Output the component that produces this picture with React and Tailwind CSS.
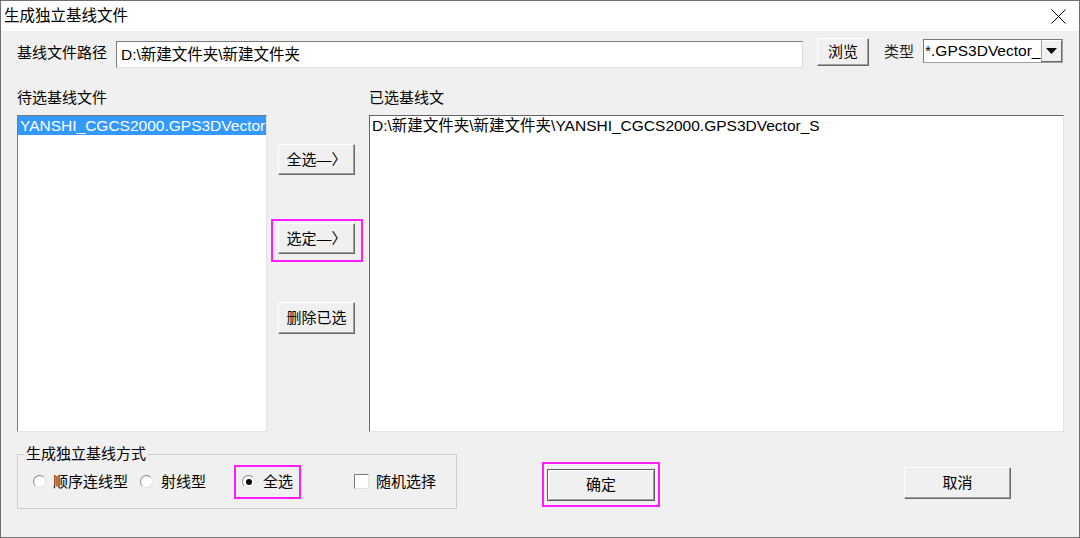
import React from "react";

function Btn({ children, className = "", def = false }) {
  return (
    <div
      className={
        "relative flex items-center justify-center bg-[#f0f0f0] text-[15px] leading-[20px] " +
        (def
          ? "border border-[#5a5a5a] shadow-[inset_1px_1px_0_#ffffff,inset_-1px_-1px_0_#a0a0a0] "
          : "border border-t-white border-l-white border-r-[#696969] border-b-[#696969] shadow-[inset_-1px_-1px_0_#a0a0a0] ") +
        className
      }
    >
      {children}
    </div>
  );
}

function Radio({ checked }) {
  return (
    <span className="flex h-[13px] w-[13px] items-center justify-center rounded-full border border-t-[#8a8a8a] border-l-[#8a8a8a] border-r-[#e3e3e3] border-b-[#e3e3e3] bg-white">
      {checked ? <span className="h-[6px] w-[6px] rounded-full bg-black" /> : null}
    </span>
  );
}

export default function App() {
  return (
    <div className="flex h-[538px] w-[1080px] flex-col overflow-hidden border border-[#707070] bg-[#f0f0f0] font-['Liberation_Sans','Noto_Sans_CJK_SC',sans-serif] text-[15px] leading-[20px] text-black">
      {/* title bar */}
      <div className="flex h-[30px] shrink-0 items-center justify-between bg-white pl-[3px] pr-[13px]">
        <span className="text-[15.5px] leading-[20px]">生成独立基线文件</span>
        <svg width="15" height="15" viewBox="0 0 15 15" className="mt-[1px]">
          <path d="M0.5 0.5 L14.5 14.5 M14.5 0.5 L0.5 14.5" stroke="#000" strokeWidth="1" fill="none" />
        </svg>
      </div>

      {/* body */}
      <div className="flex flex-1 flex-col pl-[16px] pt-[7px]">
        {/* row 1 */}
        <div className="flex items-start">
          <div className="mt-[1px] flex h-[28px] w-[99px] items-center">基线文件路径</div>
          <div className="mt-[3px] flex h-[27px] w-[687px] items-center border border-t-[#7a7a7a] border-l-[#7a7a7a] border-r-[#dcdcdc] border-b-[#dcdcdc] bg-white pl-[4px] text-[15.5px]">
            {"D:\\新建文件夹\\新建文件夹"}
          </div>
          <Btn className="ml-[14px] h-[28px] w-[52px]">浏览</Btn>
          <div className="ml-[15px] flex h-[28px] w-[30px] items-center text-[#222]">类型</div>
          <div className="ml-[9px] mt-[1px] flex h-[24px] w-[140px] border border-t-[#7a7a7a] border-l-[#7a7a7a] border-r-[#a0a0a0] border-b-[#a0a0a0] bg-white">
            <div className="flex flex-1 items-center overflow-hidden whitespace-nowrap pl-[1px] text-[15.5px]">*.GPS3DVector_</div>
            <div className="flex w-[21px] items-center justify-center border border-t-white border-l-[#a0a0a0] border-r-[#696969] border-b-[#696969] bg-[#f0f0f0]">
              <svg width="11" height="6" viewBox="0 0 11 6">
                <path d="M0 0 L11 0 L5.5 6 Z" fill="#000" />
              </svg>
            </div>
          </div>
        </div>

        {/* labels */}
        <div className="mt-[20px] flex h-[20px] items-center">
          <div className="w-[352px]">待选基线文件</div>
          <div>已选基线文</div>
        </div>

        {/* lists */}
        <div className="mt-[7px] flex h-[317px]">
          <div className="w-[250px] border border-t-[#7a7a7a] border-l-[#7a7a7a] border-r-[#e3e3e3] border-b-[#e3e3e3] bg-white">
            <div className="flex h-[19px] items-center whitespace-nowrap bg-[#3399ff] pl-[2px] text-[15.5px] text-white">YANSHI_CGCS2000.GPS3DVector</div>
          </div>
          <div className="flex w-[102px] flex-col items-start pl-[11px]">
            <Btn className="mt-[29px] h-[31px] w-[77px]">全选—〉</Btn>
            <Btn className="mt-[48px] h-[31px] w-[77px]">
              选定—〉
              <span className="pointer-events-none absolute bottom-[-9px] left-[-8px] right-[-9px] top-[-5px] border-2 border-[#ff1cff]" />
            </Btn>
            <Btn className="mt-[48px] h-[32px] w-[77px]">删除已选</Btn>
          </div>
          <div className="w-[695px] border border-t-[#646464] border-l-[#646464] border-r-[#e3e3e3] border-b-[#e3e3e3] bg-white pl-[2px]">
            <div className="h-[20px] whitespace-nowrap text-[15.5px]">{"D:\\新建文件夹\\新建文件夹\\YANSHI_CGCS2000.GPS3DVector_S"}</div>
          </div>
        </div>

        {/* bottom */}
        <div className="mt-[22px] flex items-start">
          <div className="relative flex h-[55px] w-[440px] items-center border border-[#cdcdcd] pl-[15px]">
            <span className="absolute left-[6px] top-[-11px] bg-[#f0f0f0] px-[2px] leading-[20px]">生成独立基线方式</span>
            <Radio />
            <span className="ml-[7px]">顺序连线型</span>
            <span className="ml-[12px]">
              <Radio />
            </span>
            <span className="ml-[8px]">射线型</span>
            <span className="relative ml-[36px] flex h-[20px] items-center">
              <Radio checked />
              <span className="ml-[8px]">全选</span>
              <span className="pointer-events-none absolute bottom-[-7px] left-[-8px] right-[-8px] top-[-7px] border-2 border-[#ff1cff]" />
            </span>
            <span className="ml-[61px] h-[15px] w-[15px] border border-t-[#7a7a7a] border-l-[#7a7a7a] border-r-[#e3e3e3] border-b-[#e3e3e3] bg-white" />
            <span className="ml-[7px]">随机选择</span>
          </div>
          <Btn def className="ml-[90px] mt-[15px] h-[32px] w-[108px]">
            确定
            <span className="pointer-events-none absolute bottom-[-7px] left-[-6px] right-[-6px] top-[-8px] border-2 border-[#ff1cff]" />
          </Btn>
          <Btn className="ml-[249px] mt-[13px] h-[32px] w-[107px]">取消</Btn>
        </div>
      </div>
    </div>
  );
}
